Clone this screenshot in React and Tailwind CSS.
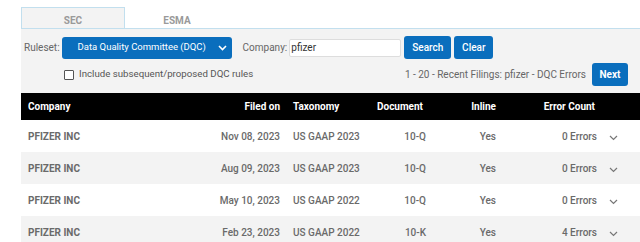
import React from "react";

const rows = [
  { date: "Nov 08, 2023", tax: "US GAAP 2023", doc: "10-Q", err: "0 Errors" },
  { date: "Aug 09, 2023", tax: "US GAAP 2023", doc: "10-Q", err: "0 Errors" },
  { date: "May 10, 2023", tax: "US GAAP 2022", doc: "10-Q", err: "0 Errors" },
  { date: "Feb 23, 2023", tax: "US GAAP 2022", doc: "10-K", err: "4 Errors" },
];

function Chevron({ className, w = 1.2 }) {
  return (
    <svg width="9" height="6" viewBox="0 0 9 6" className={className}>
      <polyline points="1,1 4.5,4.5 8,1" fill="none" stroke="currentColor" strokeWidth={w} />
    </svg>
  );
}

export default function App() {
  return (
    <div className="w-[640px] h-[242px] overflow-hidden bg-white font-['Roboto',sans-serif] text-[10px] whitespace-nowrap">
      <div className="pl-[21px]">
        {/* tabs */}
        <div className="pt-[7px] flex border-b border-[#c2dfee]">
          <div className="w-[104px] h-[21px] bg-[#f3f3f3] border border-b-0 border-[#c2dfee] text-center pt-[7px] leading-[12px] font-bold text-[#9a9a9a]">
            SEC
          </div>
          <div className="w-[104px] h-[21px] text-center pt-[8px] leading-[12px] font-bold text-[#9a9a9a]">
            ESMA
          </div>
        </div>
        {/* panel */}
        <div className="bg-[#f3f3f3] pt-[7px] pb-[7px]">
          <div className="flex items-center h-[23px]">
            <span className="ml-[3px] text-[#666]">Ruleset:</span>
            <div className="ml-[2px] w-[170px] h-[22px] bg-[#0a6ebd] rounded-[3px] flex items-center text-white text-[9.5px]">
              <span className="ml-[16px] flex-1">Data Quality Committee (DQC)</span>
              <Chevron className="mr-[5px] text-white" w={1.6} />
            </div>
            <span className="ml-[11px] text-[#666]">Company:</span>
            <div className="ml-[2px] w-[112px] h-[18px] bg-white border border-[#ddd] rounded-[2px] flex items-center pl-[1px] text-[#333]">
              pfizer
            </div>
            <div className="ml-[3px] w-[47px] h-[23px] bg-[#0a6ebd] rounded-[3px] flex items-center justify-center text-white font-medium">
              Search
            </div>
            <div className="ml-[3px] w-[39px] h-[23px] bg-[#0a6ebd] rounded-[3px] flex items-center justify-center text-white font-medium">
              Clear
            </div>
          </div>
          <div className="mt-[4px] flex items-center h-[23px]">
            <div className="ml-[43px] w-[10px] h-[10px] bg-white border border-[#555] rounded-[1px]" />
            <span className="ml-[5px] text-[#555] text-[9.7px]">Include subsequent/proposed DQC rules</span>
            <span className="ml-auto text-[#666]">1 - 20 - Recent Filings: pfizer - DQC Errors</span>
            <div className="ml-[6px] mr-[12px] w-[36px] h-[23px] bg-[#0a6ebd] rounded-[3px] flex items-center justify-center text-white font-bold">
              Next
            </div>
          </div>
        </div>
        {/* table */}
        <div className="flex items-center h-[27px] bg-black text-white font-bold">
          <div className="w-[183px] pl-[7px]">Company</div>
          <div className="w-[76px] text-right">Filed on</div>
          <div className="w-[90px] pl-[13px]">Taxonomy</div>
          <div className="w-[53px] text-right">Document</div>
          <div className="w-[73px] text-right">Inline</div>
          <div className="w-[99px] text-right">Error Count</div>
          <div className="flex-1" />
        </div>
        {rows.map((r, i) => (
          <div
            key={i}
            className={`flex items-center h-[32px] font-medium text-[#6a6a6a] ${i % 2 === 1 ? "bg-[#f3f3f3]" : "bg-white"}`}
          >
            <div className="w-[183px] pl-[7px] font-bold">PFIZER INC</div>
            <div className="w-[76px] text-right">{r.date}</div>
            <div className="w-[90px] pl-[13px]">{r.tax}</div>
            <div className="w-[56px] text-right">{r.doc}</div>
            <div className="w-[70px] text-right">Yes</div>
            <div className="w-[101px] text-right">{r.err}</div>
            <div className="flex-1">
              <Chevron className="ml-[12px] mt-[3px] text-[#777]" />
            </div>
          </div>
        ))}
      </div>
    </div>
  );
}
